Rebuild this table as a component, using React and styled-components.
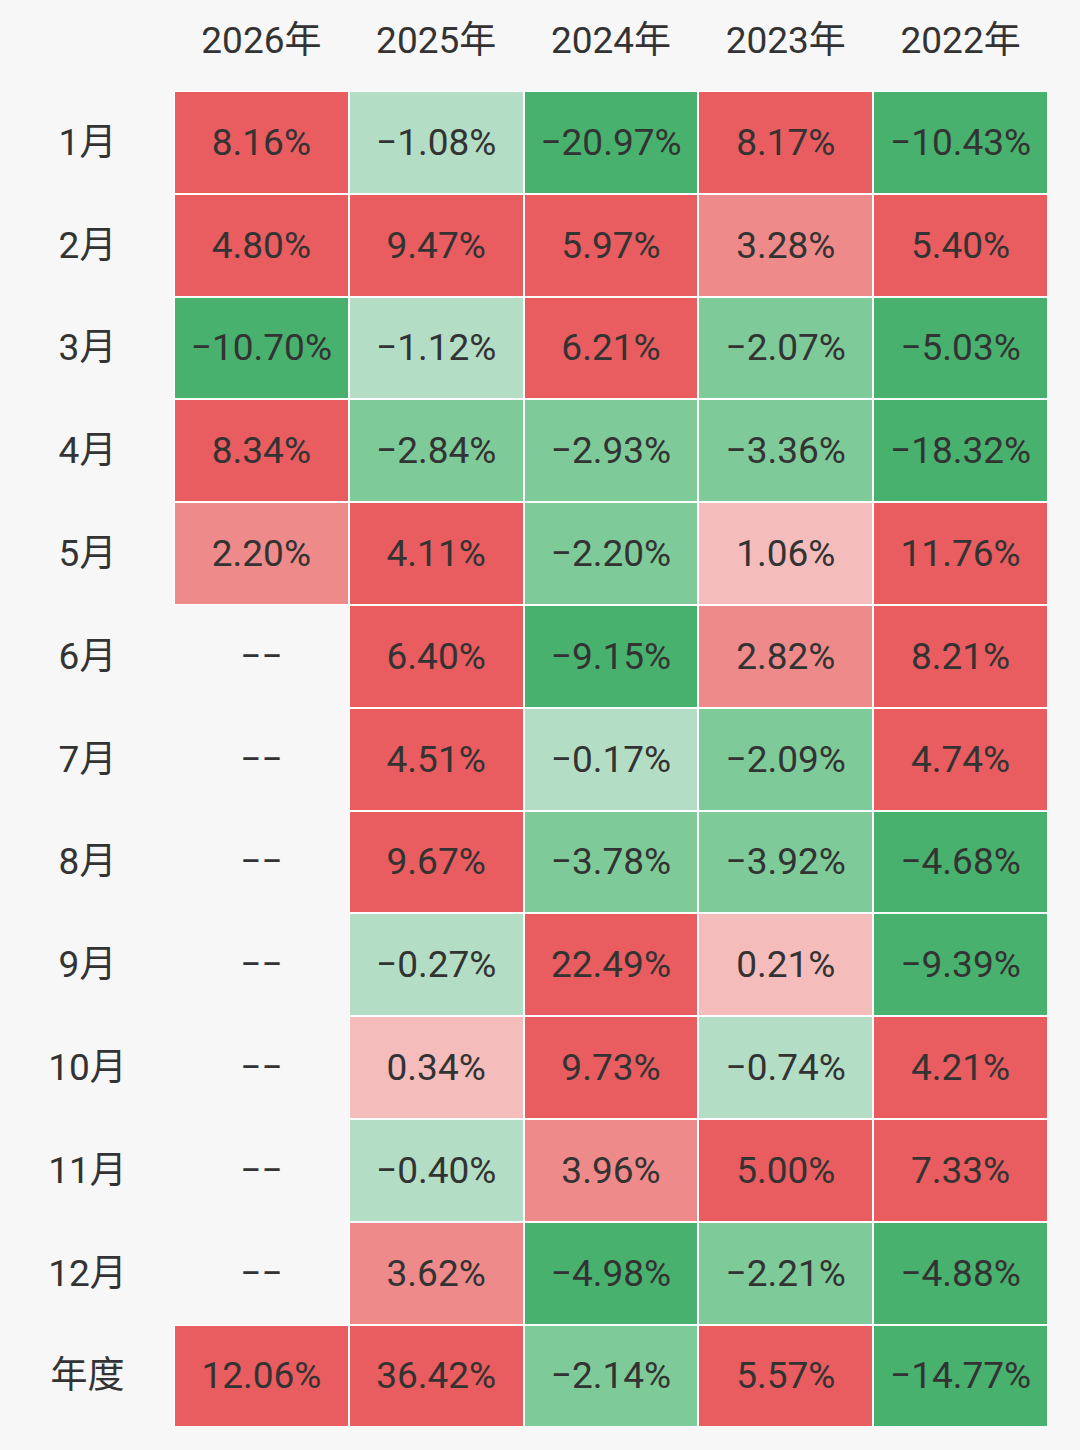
import React from 'react';
import styled, { createGlobalStyle } from 'styled-components';

const GlobalStyle = createGlobalStyle`
  html, body {
    margin: 0;
    padding: 0;
    background: #f7f7f7;
  }
  body {
    font-family: Roboto, "Noto Sans CJK SC", sans-serif;
    color: #333;
  }
`;

const years = ['2026年', '2025年', '2024年', '2023年', '2022年'];

const rows = [
  ['1月', [8.16, -1.08, -20.97, 8.17, -10.43]],
  ['2月', [4.8, 9.47, 5.97, 3.28, 5.4]],
  ['3月', [-10.7, -1.12, 6.21, -2.07, -5.03]],
  ['4月', [8.34, -2.84, -2.93, -3.36, -18.32]],
  ['5月', [2.2, 4.11, -2.2, 1.06, 11.76]],
  ['6月', [null, 6.4, -9.15, 2.82, 8.21]],
  ['7月', [null, 4.51, -0.17, -2.09, 4.74]],
  ['8月', [null, 9.67, -3.78, -3.92, -4.68]],
  ['9月', [null, -0.27, 22.49, 0.21, -9.39]],
  ['10月', [null, 0.34, 9.73, -0.74, 4.21]],
  ['11月', [null, -0.4, 3.96, 5.0, 7.33]],
  ['12月', [null, 3.62, -4.98, -2.21, -4.88]],
  ['年度', [12.06, 36.42, -2.14, 5.57, -14.77]],
];

const palette = {
  up: ['#f5bcbc', '#ef8a8b', '#e95c5f'],
  down: ['#b3dec5', '#7ecb99', '#48b16e'],
};

// shade by size of the move: under 2%, under 4%, the rest
function cellColor(v) {
  if (v === null) return 'transparent';
  const a = Math.abs(v);
  const level = a < 2 ? 0 : a < 4 ? 1 : 2;
  return v >= 0 ? palette.up[level] : palette.down[level];
}

const Table = styled.div`
  width: 1047px;
  display: grid;
  grid-template-columns: 173px repeat(5, 1fr);
  grid-template-rows: 90px repeat(13, 100.8px);
  gap: 2px;
  font-size: 37px;
  line-height: 1;
`;

const HeadCell = styled.div`
  display: flex;
  align-items: center;
  justify-content: center;
  padding-bottom: 10px;
  color: #333;
`;

const RowLabel = styled.div`
  display: flex;
  align-items: center;
  justify-content: center;
  padding-left: 2px;
  color: #333;
`;

const Cell = styled.div`
  display: flex;
  align-items: center;
  justify-content: center;
  background: ${({ $bg }) => $bg};
  box-shadow: ${({ $empty }) => ($empty ? 'none' : '0 0 0 1px #fff')};
  color: #333;
`;

function fmt(v) {
  if (v === null) return '\u2212\u2212';
  const s = `${Math.abs(v).toFixed(2)}%`;
  return v < 0 ? `\u2212${s}` : s;
}

export default function App() {
  return (
    <>
      <GlobalStyle />
      <Table>
        <HeadCell />
        {years.map((y) => (
          <HeadCell key={y}>{y}</HeadCell>
        ))}
        {rows.map(([label, values]) => (
          <React.Fragment key={label}>
            <RowLabel>{label}</RowLabel>
            {values.map((v, i) => (
              <Cell key={i} $bg={cellColor(v)} $empty={v === null}>
                {fmt(v)}
              </Cell>
            ))}
          </React.Fragment>
        ))}
      </Table>
    </>
  );
}
